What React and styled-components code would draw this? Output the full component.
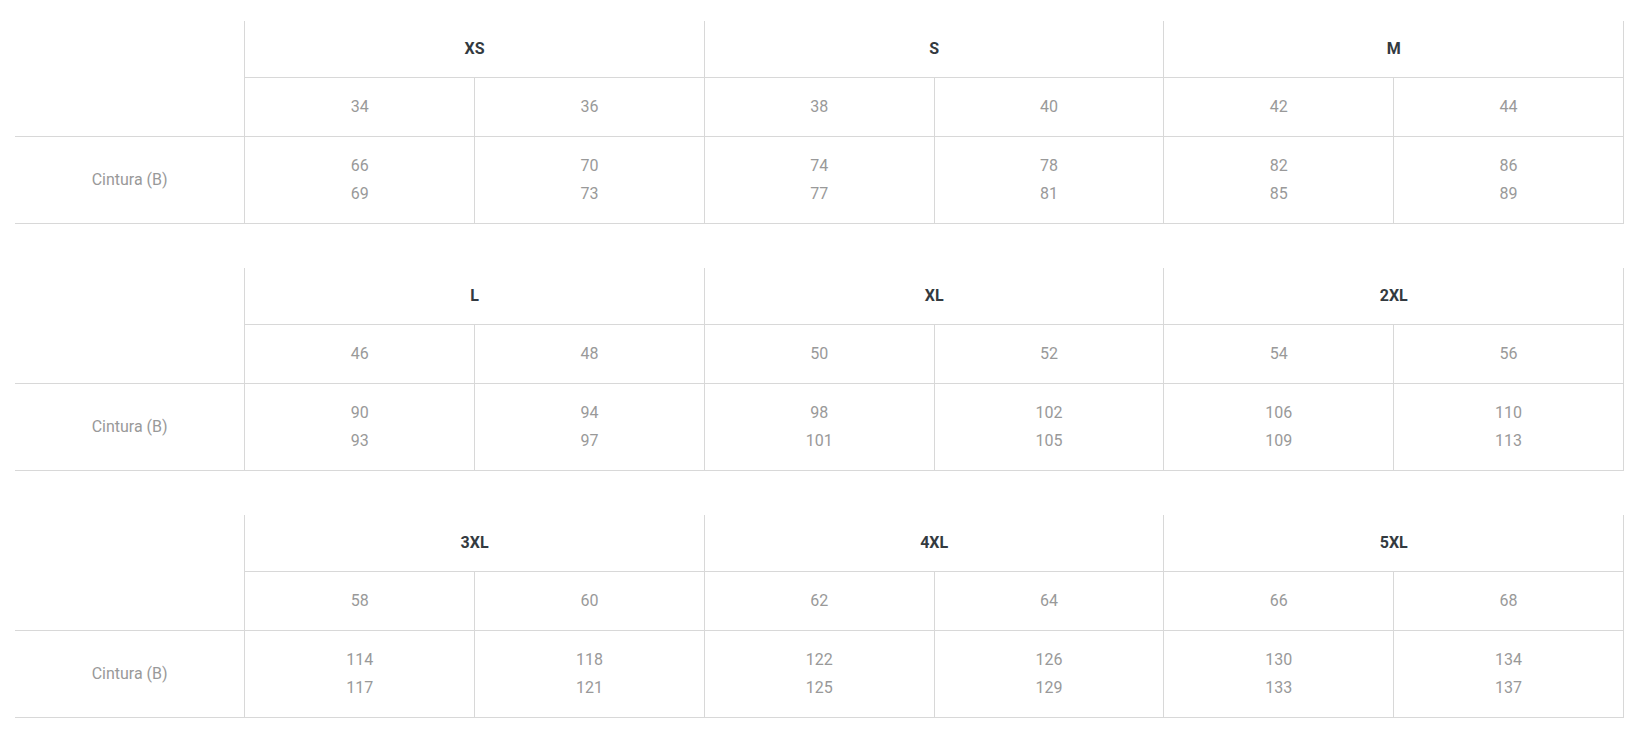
import styled, { createGlobalStyle } from "styled-components";

const GlobalStyle = createGlobalStyle`
  body {
    margin: 0;
    background: #fff;
    font-family: Roboto, "Liberation Sans", sans-serif;
  }
`;

const Page = styled.div`
  padding: 21px 22px 0 15px;
`;

const SizeTable = styled.table`
  width: 1609px;
  table-layout: fixed;
  border-collapse: collapse;
  margin-bottom: 44px;
  font-size: 16px;
`;

const Corner = styled.th`
  border: none;
  border-bottom: 1px solid #d8d8d8;
`;

const SizeHead = styled.th`
  padding: 15px;
  line-height: 26px;
  font-weight: 700;
  color: #333a40;
  text-align: center;
  border-left: 1px solid #d8d8d8;
  border-right: 1px solid #d8d8d8;
  border-bottom: 1px solid #d8d8d8;
`;

const Cell = styled.td`
  padding: 15px;
  line-height: 28px;
  color: #999;
  text-align: center;
  vertical-align: middle;
  border: 1px solid #d8d8d8;
  border-left: ${(p) => (p.$first ? "none" : "1px solid #d8d8d8")};
`;

const groups = [
  [
    { size: "XS", eu: [34, 36], waist: [[66, 69], [70, 73]] },
    { size: "S", eu: [38, 40], waist: [[74, 77], [78, 81]] },
    { size: "M", eu: [42, 44], waist: [[82, 85], [86, 89]] },
  ],
  [
    { size: "L", eu: [46, 48], waist: [[90, 93], [94, 97]] },
    { size: "XL", eu: [50, 52], waist: [[98, 101], [102, 105]] },
    { size: "2XL", eu: [54, 56], waist: [[106, 109], [110, 113]] },
  ],
  [
    { size: "3XL", eu: [58, 60], waist: [[114, 117], [118, 121]] },
    { size: "4XL", eu: [62, 64], waist: [[122, 125], [126, 129]] },
    { size: "5XL", eu: [66, 68], waist: [[130, 133], [134, 137]] },
  ],
];

function Chart({ sizes }) {
  return (
    <SizeTable>
      <thead>
        <tr>
          <Corner rowSpan={2} />
          {sizes.map((s) => (
            <SizeHead key={s.size} colSpan={2}>
              {s.size}
            </SizeHead>
          ))}
        </tr>
        <tr>
          {sizes.flatMap((s) =>
            s.eu.map((n) => <Cell key={n}>{n}</Cell>)
          )}
        </tr>
      </thead>
      <tbody>
        <tr>
          <Cell $first>Cintura (B)</Cell>
          {sizes.flatMap((s) =>
            s.waist.map(([a, b]) => (
              <Cell key={a}>
                {a}
                <br />
                {b}
              </Cell>
            ))
          )}
        </tr>
      </tbody>
    </SizeTable>
  );
}

export default function App() {
  return (
    <Page>
      <GlobalStyle />
      {groups.map((g, i) => (
        <Chart key={i} sizes={g} />
      ))}
    </Page>
  );
}
